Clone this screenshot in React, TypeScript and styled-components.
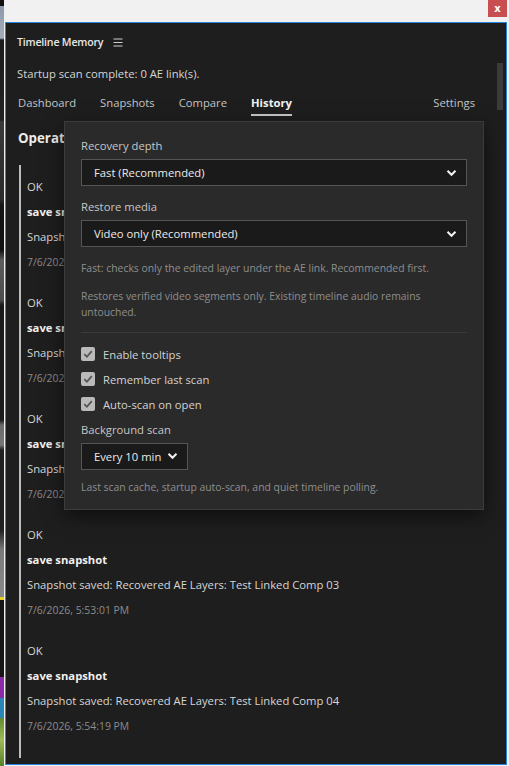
import React from "react";
import styled, { createGlobalStyle } from "styled-components";

const GlobalStyle = createGlobalStyle`
  html, body { margin: 0; padding: 0; background: #151515; }
  * { box-sizing: border-box; }
  #root { width: 509px; height: 766px; }
`;

const FONT = `"Open Sans", "Noto Sans", "Liberation Sans", sans-serif`;
const BASE = "11.25px";
const SMALL = "10.4px";

const Screen = styled.div`
  width: 509px;
  height: 766px;
  display: flex;
  overflow: hidden;
  font-family: ${FONT};
`;

const DesktopStrip = styled.div`
  width: 4px;
  flex: none;
  background: linear-gradient(
    to bottom,
    #111 0px, #111 6px,
    #8e9aab 6px, #a3adbb 38px,
    #1c1c1c 40px, #222 120px,
    #3a3a3a 122px, #2a2a2a 200px,
    #151515 205px, #111 250px,
    #5c5c5c 260px, #4d4d4d 300px,
    #1a1a1a 305px, #1a1a1a 420px,
    #6a6a6a 425px, #777 445px,
    #202020 450px, #202020 530px,
    #7a7a7a 550px, #8a8a8a 597px,
    #e6d21a 597px, #e6d21a 600px,
    #161616 600px, #161616 677px,
    #8a2aa8 677px, #8a2aa8 698px,
    #2b86b8 698px, #2b86b8 718px,
    #5f8c2e 718px, #9dbb56 740px, #58812a 766px
  );
`;

const Window = styled.div`
  flex: 1;
  display: flex;
  flex-direction: column;
  background: #f1f1f1;
  padding: 0 2px 1px 1px;
`;

const TitleBar = styled.div`
  height: 22px;
  flex: none;
  display: flex;
  justify-content: flex-end;
  align-items: flex-start;
`;

const CloseButton = styled.div`
  width: 19px;
  height: 17px;
  background: #c84f4f;
  color: #fff;
  font-family: "DejaVu Sans", sans-serif;
  font-size: 10px;
  font-weight: bold;
  display: flex;
  align-items: center;
  justify-content: center;
`;

const Frame = styled.div`
  flex: 1;
  position: relative;
  border: 1px solid #2b83dc;
  background: #1e1e1e;
  display: flex;
  flex-direction: column;
  overflow: hidden;
  color: #d4d4d4;
`;

const Header = styled.div`
  display: flex;
  align-items: center;
  gap: 10px;
  padding: 11px 11px 0;
  height: 27px;
`;

const AppTitle = styled.div`
  font-size: 10.6px;
  font-weight: 600;
  letter-spacing: -0.2px;
  color: #e8e8e8;
  line-height: 16px;
`;

const Status = styled.div`
  padding: 16px 11px 0;
  font-size: ${BASE};
  line-height: 16px;
  color: #d6d6d6;
`;

const Tabs = styled.div`
  display: flex;
  align-items: flex-end;
  gap: 24px;
  padding: 13px 31px 0 12px;
`;

const Tab = styled.div<{ $active?: boolean; $right?: boolean }>`
  font-size: ${BASE};
  line-height: 16px;
  padding-bottom: 3px;
  border-bottom: 2px solid ${(p) => (p.$active ? "#c9c9c9" : "transparent")};
  color: ${(p) => (p.$active ? "#f2f2f2" : "#c4c4c4")};
  font-weight: ${(p) => (p.$active ? 700 : 400)};
  margin-left: ${(p) => (p.$right ? "auto" : "0")};
  ${(p) => (p.$right ? "margin-bottom: 2px; border-bottom: none;" : "")}
`;

const Body = styled.div`
  flex: 1;
  padding: 13px 0 0 12px;
  display: flex;
  flex-direction: column;
`;

const SectionTitle = styled.div`
  font-size: 13.3px;
  font-weight: 700;
  line-height: 18px;
  color: #ededed;
`;

const HistoryList = styled.div`
  margin-top: 18px;
  flex: 1;
  border-left: 2px solid #bdbdbd;
  margin-left: 1px;
  margin-bottom: 6px;
  padding: 13.5px 0 0 6px;
  display: flex;
  flex-direction: column;
  gap: 25px;
`;

const Entry = styled.div`
  display: flex;
  flex-direction: column;
`;

const EntryLine = styled.div<{ $kind: "status" | "action" | "message" | "date" }>`
  line-height: 16px;
  font-size: ${(p) => (p.$kind === "date" ? SMALL : BASE)};
  font-weight: ${(p) => (p.$kind === "action" ? 700 : 400)};
  color: ${(p) =>
    p.$kind === "date" ? "#8c8c8c" : p.$kind === "action" ? "#f0f0f0" : "#d6d6d6"};
  margin-bottom: ${(p) => (p.$kind === "date" ? "0" : "9px")};
  white-space: nowrap;
`;

const Scrollbar = styled.div`
  position: absolute;
  right: 3px;
  top: 40px;
  width: 6px;
  height: 47px;
  background: #3b3b3b;
`;

const Popover = styled.div`
  position: absolute;
  left: 58px;
  top: 98px;
  width: 420px;
  background: #2a2a2a;
  border: 1px solid #3c3c3c;
  box-shadow: 0 6px 18px rgba(0, 0, 0, 0.55);
  padding: 16px 16px 14px;
  display: flex;
  flex-direction: column;
`;

const FieldLabel = styled.div<{ $top?: number }>`
  font-size: ${BASE};
  line-height: 16px;
  color: #c6c6c6;
  margin-top: ${(p) => p.$top ?? 0}px;
  margin-bottom: 5px;
`;

const Select = styled.div<{ $width?: number }>`
  width: ${(p) => (p.$width ? `${p.$width}px` : "100%")};
  height: 27px;
  background: #1a1a1a;
  border: 1px solid #555;
  display: flex;
  align-items: center;
  justify-content: space-between;
  padding: 0 9px 0 12px;
  font-size: ${BASE};
  color: #eaeaea;
`;

const Help = styled.div<{ $top?: number }>`
  font-size: ${SMALL};
  line-height: 16px;
  color: #8e8e8e;
  margin-top: ${(p) => p.$top ?? 0}px;
`;

const Divider = styled.div`
  height: 1px;
  background: #3a3a3a;
  margin: 12px 0 11px;
`;

const CheckRow = styled.div`
  display: flex;
  align-items: center;
  gap: 8px;
  height: 20px;
  margin-bottom: 5px;
  font-size: ${BASE};
  color: #d2d2d2;
`;

const CheckBox = styled.span`
  width: 14px;
  height: 14px;
  border-radius: 2px;
  background: #bababa;
  display: flex;
  align-items: center;
  justify-content: center;
`;

const Chevron = () => (
  <svg width="11" height="8" viewBox="0 0 11 8">
    <polyline points="1.5,1.8 5.5,5.8 9.5,1.8" fill="none" stroke="#f2f2f2" strokeWidth="2" />
  </svg>
);

const Check = () => (
  <svg width="12" height="12" viewBox="0 0 12 12">
    <polyline points="2.3,6.2 4.9,8.8 9.8,3.2" fill="none" stroke="#555" strokeWidth="1.8" />
  </svg>
);

const MenuIcon = () => (
  <svg width="10" height="9" viewBox="0 0 10 9">
    <line x1="0.5" y1="1" x2="9.5" y2="1" stroke="#cfcfcf" strokeWidth="1" />
    <line x1="0.5" y1="4.5" x2="9.5" y2="4.5" stroke="#cfcfcf" strokeWidth="1" />
    <line x1="0.5" y1="8" x2="9.5" y2="8" stroke="#cfcfcf" strokeWidth="1" />
  </svg>
);

const entries = [
  { msg: "Snapshot saved: Recovered AE Layers: Test Linked Comp 00", date: "7/6/2026, 5:49:12 PM" },
  { msg: "Snapshot saved: Recovered AE Layers: Test Linked Comp 01", date: "7/6/2026, 5:50:37 PM" },
  { msg: "Snapshot saved: Recovered AE Layers: Test Linked Comp 02", date: "7/6/2026, 5:51:48 PM" },
  { msg: "Snapshot saved: Recovered AE Layers: Test Linked Comp 03", date: "7/6/2026, 5:53:01 PM" },
  { msg: "Snapshot saved: Recovered AE Layers: Test Linked Comp 04", date: "7/6/2026, 5:54:19 PM" },
];

export default function App() {
  return (
    <>
      <GlobalStyle />
      <Screen>
        <DesktopStrip />
        <Window>
          <TitleBar>
            <CloseButton>x</CloseButton>
          </TitleBar>
          <Frame>
            <Header>
              <AppTitle>Timeline Memory</AppTitle>
              <MenuIcon />
            </Header>
            <Status>Startup scan complete: 0 AE link(s).</Status>
            <Tabs>
              <Tab>Dashboard</Tab>
              <Tab>Snapshots</Tab>
              <Tab>Compare</Tab>
              <Tab $active>History</Tab>
              <Tab $right>Settings</Tab>
            </Tabs>
            <Body>
              <SectionTitle>Operation history</SectionTitle>
              <HistoryList>
                {entries.map((e, i) => (
                  <Entry key={i}>
                    <EntryLine $kind="status">OK</EntryLine>
                    <EntryLine $kind="action">save snapshot</EntryLine>
                    <EntryLine $kind="message">{e.msg}</EntryLine>
                    <EntryLine $kind="date">{e.date}</EntryLine>
                  </Entry>
                ))}
              </HistoryList>
            </Body>
            <Scrollbar />
            <Popover>
              <FieldLabel>Recovery depth</FieldLabel>
              <Select>
                <span>Fast (Recommended)</span>
                <Chevron />
              </Select>
              <FieldLabel $top={13}>Restore media</FieldLabel>
              <Select>
                <span>Video only (Recommended)</span>
                <Chevron />
              </Select>
              <Help $top={13}>Fast: checks only the edited layer under the AE link. Recommended first.</Help>
              <Help $top={12}>
                Restores verified video segments only. Existing timeline audio remains
                <br />
                untouched.
              </Help>
              <Divider />
              <CheckRow>
                <CheckBox><Check /></CheckBox>
                Enable tooltips
              </CheckRow>
              <CheckRow>
                <CheckBox><Check /></CheckBox>
                Remember last scan
              </CheckRow>
              <CheckRow>
                <CheckBox><Check /></CheckBox>
                Auto-scan on open
              </CheckRow>
              <FieldLabel $top={2.5}>Background scan</FieldLabel>
              <Select $width={107}>
                <span>Every 10 min</span>
                <Chevron />
              </Select>
              <Help $top={9}>Last scan cache, startup auto-scan, and quiet timeline polling.</Help>
            </Popover>
          </Frame>
        </Window>
      </Screen>
    </>
  );
}
